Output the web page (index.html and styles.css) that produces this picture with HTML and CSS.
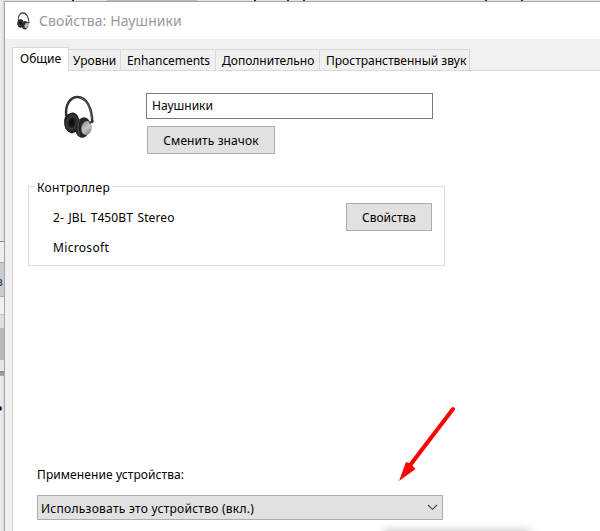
FILE: index.html
```
<!DOCTYPE html>
<html lang="ru">
<head>
<meta charset="utf-8">
<title>Свойства: Наушники</title>
<link rel="stylesheet" href="styles.css">
</head>
<body>
<svg width="0" height="0" class="defs">
  <defs>
    <linearGradient id="cap" x1="0" y1="0" x2="1" y2="1"><stop offset="0" stop-color="#888"/><stop offset=".5" stop-color="#c4c4c4"/><stop offset="1" stop-color="#777"/></linearGradient>
    <radialGradient id="pad"><stop offset="0" stop-color="#080808"/><stop offset=".4" stop-color="#181818"/><stop offset=".65" stop-color="#3c3c3c"/><stop offset="1" stop-color="#181818"/></radialGradient>
    <symbol id="headphones" viewBox="0 0 32 44">
      <path d="M3.2 21C2 10 7 2 14.5 2C23.5 2 29 13 29.2 27" fill="none" stroke="#333" stroke-width="2.5"/>
      <path d="M17 2.6C24 4.5 27.8 13 28.6 24" fill="none" stroke="#777" stroke-width=".7"/>
      <path d="M1.2 25Q2 19 8 18.5L15 22V36L9 38.5Q1 36 1.2 25Z" fill="#1b1b1b"/>
      <ellipse cx="8.8" cy="27.5" rx="7.2" ry="10" fill="url(#pad)" transform="rotate(12 8.8 27.5)"/>
      <ellipse cx="20" cy="32.5" rx="7.4" ry="10.4" fill="#252525" transform="rotate(14 20 32.5)"/>
      <path d="M17 24Q12.5 33 17 41" fill="none" stroke="#666" stroke-width=".7"/>
      <ellipse cx="23.6" cy="33" rx="5.2" ry="7" fill="url(#cap)" transform="rotate(14 23.6 33)"/>
      <path d="M26.5 28L30.5 26" stroke="#333" stroke-width="2"/>
    </symbol>
  </defs>
</svg>
<div class="desktop">
  <div class="behind-top"><i class="t1"></i><i class="t2"></i><i class="t3"></i><i class="t4"></i><i class="t5"></i><i class="t6"></i><i class="t7"></i></div>
  <div class="behind-left">
    <div class="l1"></div><div class="l2"></div><div class="l3"><span>в</span></div><div class="l4"></div><div class="l5"></div><div class="l6"></div><div class="l7"></div><div class="l8"><span>ь</span></div>
  </div>
  <div class="window">
    <div class="titlebar"><svg class="app-icon"><use href="#headphones"/></svg><span class="title">Свойства: Наушники</span></div>
    <div class="tabs">
      <div class="tab active"><span>Общие</span></div>
      <div class="tab levels"><span>Уровни</span></div>
      <div class="tab enh"><span>Enhancements</span></div>
      <div class="tab adv"><span>Дополнительно</span></div>
      <div class="tab spatial"><span>Пространственный звук</span></div>
      <div class="tab-rest"></div>
    </div>
    <div class="page">
      <div class="device">
        <svg class="device-icon"><use href="#headphones"/></svg>
        <div class="device-fields">
          <div class="name-input"><span>Наушники</span></div>
          <div class="button change"><span>Сменить значок</span></div>
        </div>
      </div>
      <div class="group">
        <div class="legend"><span>Контроллер</span></div>
        <div class="group-row"><span class="model">2- JBL T450BT Stereo</span><div class="button props"><span>Свойства</span></div></div>
        <div class="vendor"><span>Microsoft</span></div>
      </div>
      <div class="usage-label"><span>Применение устройства:</span></div>
      <div class="select"><span>Использовать это устройство (вкл.)</span><svg class="chevron" viewBox="0 0 11 7"><path d="M1 1L5.5 5.3L10 1" fill="none" stroke="#444" stroke-width="1.1"/></svg></div>
    </div>
  </div>
  <svg class="arrow" viewBox="0 0 70 90"><path d="M63 9L21 64" stroke="#f00" stroke-width="4" stroke-linecap="round"/><path d="M9 81L16 62L21 64L25.5 69Z" fill="#f00"/></svg>
  <div class="shadow"></div>
</div>
</body>
</html>
```
FILE: styles.css
```
* { box-sizing: border-box; }
body { margin: 0; width: 600px; height: 531px; overflow: hidden; font: 12px/16px "Noto Sans", "Open Sans", sans-serif; color: #000; }
.defs { position: absolute; }
span { white-space: nowrap; }
.desktop { position: relative; display: grid; grid-template: 1px 530px / 4px 596px; width: 600px; height: 531px; overflow: hidden; }
.behind-top { grid-column: 1 / 3; display: flex; background: #e3e3e3; }
.behind-top i { height: 1px; width: 2px; background: #312040; }
.behind-top .t1 { margin-left: 72px; }
.behind-top .t2 { margin-left: 33px; width: 90px; background: #bbb; }
.behind-top .t3 { margin-left: 57px; }
.behind-top .t4 { margin-left: 31px; }
.behind-top .t5 { margin-left: 14px; }
.behind-top .t6 { margin-left: 180px; }
.behind-top .t7 { margin-left: 34px; }
.behind-left { display: flex; flex-direction: column; background: #e9eaec; overflow: hidden; }
.l1 { height: 240px; background: linear-gradient(90deg, #f0f0f0, #dcdcde); }
.l2 { height: 21px; background: #eee; border-top: 1px solid #85858c; }
.l3 { height: 35px; background: #ccc; border: solid #aaa; border-width: 1px 0; padding-top: 11px; }
.l3 span { margin-left: -4px; color: #24406a; }
.l4 { height: 17px; background: #f1f1f1; }
.l5 { height: 14px; background: #ddd; border-top: 1px solid #c8c8c8; }
.l6 { height: 32px; background: #b9b9b9; }
.l7 { height: 16px; background: linear-gradient(#e5e5e5 11px, #888 11px, #aaa); }
.l8 { height: 155px; background: linear-gradient(90deg, #eee, #dcdcde); padding-top: 23px; }
.l8 span { margin-left: -5px; font-weight: bold; }
.window { border: solid #a5a5a5; border-width: 1px 0 0 1px; background: #f0f0f0; display: flex; flex-direction: column; }
.titlebar { height: 37px; background: #fff; display: flex; align-items: center; color: #999; flex: none; }
.app-icon { width: 13px; height: 18px; margin-left: 12px; }
.title { font-size: 14px; margin-left: 9px; line-height: 20px; letter-spacing: .08px; }
.tabs { margin: 8px 0 0 7px; display: flex; align-items: flex-end; flex: none; height: 24px; }
.tab { height: 22px; border: solid #d9d9d9; border-width: 1px 1px 1px 0; padding: 3px 0 0 4px; }
.tab.active { width: 57px; height: 24px; background: #fff; border-width: 1px 1px 0 1px; padding: 3px 0 0 7px; }
.levels { width: 52px; }
.enh { width: 95px; padding-left: 6px; letter-spacing: -.05px; }
.adv { width: 104px; padding-left: 6px; }
.spatial { width: 150px; padding-left: 6px; }
.tab-rest { flex: 1; height: 1px; background: #d9d9d9; }
.page { flex: 1; margin-left: 7px; background: #fff; border-left: 1px solid #d9d9d9; display: flex; flex-direction: column; align-items: flex-start; }
.device { display: flex; margin-top: 22px; height: 61px; }
.device-icon { width: 32px; height: 44px; margin: 2px 0 0 50px; }
.device-fields { margin-left: 51px; }
.name-input { width: 287px; height: 26px; border: 1px solid #7a7a7a; padding: 4px 0 0 5px; }
.button { background: #e1e1e1; border: 1px solid #adadad; height: 28px; display: flex; align-items: center; justify-content: center; }
.change { width: 128px; margin: 7px 0 0 1px; letter-spacing: .1px; padding-top: 1px; }
.group { width: 417px; height: 80px; margin: 32px 0 0 15px; border: 1px solid #dcdcdc; }
.legend { margin: -8px 0 0 6px; padding: 1px 2px 0; width: 77px; background: #fff; height: 16px; letter-spacing: .33px; }
.group-row { display: flex; align-items: center; justify-content: space-between; padding: 0 12px 0 24px; margin-top: 8px; }
.model { letter-spacing: .1px; word-spacing: 1.3px; padding-top: 2px; }
.props { width: 86px; padding-top: 1px; }
.vendor { margin: 9px 0 0 24px; letter-spacing: .33px; }
.usage-label { margin: 201px 0 0 24px; height: 16px; letter-spacing: .09px; }
.select { width: 406px; height: 25px; margin: 12px 0 0 24px; border: 1px solid #adadad; background: #e1e1e1; display: flex; align-items: center; justify-content: space-between; padding: 0 4px 0 3px; }
.select span { letter-spacing: .26px; padding-top: 2px; }
.chevron { width: 11px; height: 7px; }
.arrow { position: absolute; left: 390px; top: 400px; width: 70px; height: 90px; }
.shadow { position: absolute; left: 386px; top: 533px; width: 142px; height: 10px; box-shadow: 0 0 10px 2px rgba(0,0,0,.28); }
```
